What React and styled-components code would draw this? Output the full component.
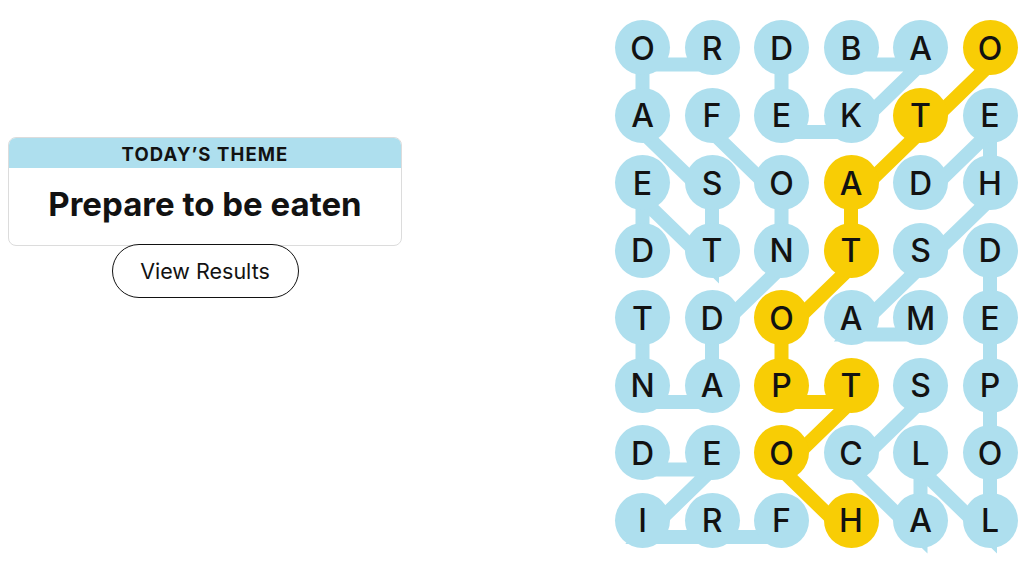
import React from "react";
import styled, { createGlobalStyle } from "styled-components";

const GlobalStyle = createGlobalStyle`
  html, body {
    margin: 0;
    padding: 0;
    background: #fff;
  }
  body {
    font-family: Inter, "Liberation Sans", Arial, sans-serif;
    color: #121212;
  }
`;

const BLUE = "#aedfee";
const YELLOW = "#f8cd05";

// board geometry
const CELL = 55;
const COL_STEP = 69.5;
const ROW_STEP = 67.5;
const LINE_SHIFT = 17;

const LETTERS = [
  "ORDBAO",
  "AFEKTE",
  "ESOADH",
  "DTNTSD",
  "TDOAME",
  "NAPTSP",
  "DEOCLO",
  "IRFHAL",
];

const WORDS = [
  // ROASTED
  { spangram: false, path: [[0, 1], [0, 0], [1, 0], [2, 1], [3, 1], [2, 0], [3, 0]] },
  // FONDANT
  { spangram: false, path: [[1, 1], [2, 2], [3, 2], [4, 1], [5, 1], [5, 0], [4, 0]] },
  // FRIED
  { spangram: false, path: [[7, 2], [7, 1], [7, 0], [6, 1], [6, 0]] },
  // BAKED
  { spangram: false, path: [[0, 3], [0, 4], [1, 3], [1, 2], [0, 2]] },
  // MASHED
  { spangram: false, path: [[4, 4], [4, 3], [3, 4], [2, 5], [1, 5], [2, 4]] },
  // SCALLOPED
  { spangram: false, path: [[5, 4], [6, 3], [7, 4], [6, 4], [7, 5], [6, 5], [5, 5], [4, 5], [3, 5]] },
  // HOTPOTATO
  { spangram: true, path: [[7, 3], [6, 2], [5, 3], [5, 2], [4, 2], [3, 3], [2, 3], [1, 4], [0, 5]] },
];

const spangramCells = new Set(
  WORDS.filter((w) => w.spangram).flatMap((w) => w.path.map(([r, c]) => `${r}-${c}`))
);

const Page = styled.main`
  display: flex;
  justify-content: space-between;
  align-items: flex-start;
  width: 1031px;
  height: 580px;
  padding: 0 13.5px 0 8px;
  box-sizing: border-box;
  overflow: hidden;
`;

const Side = styled.section`
  width: 394px;
  padding-top: 137px;
  display: flex;
  flex-direction: column;
  align-items: center;
`;

const ThemeCard = styled.div`
  width: 100%;
  box-sizing: border-box;
  border: 1px solid #dcdcdc;
  border-radius: 8px;
  overflow: hidden;
  background: #fff;
`;

const ThemeLabel = styled.h2`
  margin: 0;
  height: 30px;
  display: flex;
  align-items: center;
  justify-content: center;
  padding-top: 2px;
  box-sizing: border-box;
  background: ${BLUE};
  font-size: 18.5px;
  font-weight: 700;
  letter-spacing: 1.1px;
  text-transform: uppercase;
`;

const ThemeText = styled.h1`
  margin: 0;
  height: 77px;
  padding-bottom: 5px;
  box-sizing: border-box;
  display: flex;
  align-items: center;
  justify-content: center;
  font-size: 33px;
  font-weight: 700;
  letter-spacing: 0;
`;

const ResultsButton = styled.button`
  margin-top: -2px;
  width: 187px;
  height: 54px;
  border: 1px solid #121212;
  border-radius: 27px;
  background: #fff;
  color: #121212;
  font-family: inherit;
  font-size: 21.5px;
  font-weight: 400;
  cursor: pointer;
`;

const Board = styled.div`
  position: relative;
  margin-top: 20px;
`;

const Lines = styled.svg`
  position: absolute;
  left: 0;
  top: 0;
  overflow: visible;
  z-index: 0;
`;

const Grid = styled.div`
  position: relative;
  z-index: 1;
  display: grid;
  grid-template-columns: repeat(6, ${CELL}px);
  grid-auto-rows: ${CELL}px;
  column-gap: ${COL_STEP - CELL}px;
  row-gap: ${ROW_STEP - CELL}px;
`;

const Cell = styled.div`
  width: ${CELL}px;
  height: ${CELL}px;
  border-radius: 50%;
  background: ${(p) => (p.$spangram ? YELLOW : BLUE)};
  display: flex;
  align-items: center;
  justify-content: center;
  padding-top: 1px;
  box-sizing: border-box;
  font-size: 32px;
  font-weight: 500;
  color: #121212;
`;

const cx = (c) => CELL / 2 + c * COL_STEP;
const cy = (r) => CELL / 2 + r * ROW_STEP + LINE_SHIFT;

const boardW = 6 * CELL + 5 * (COL_STEP - CELL);
const boardH = 8 * CELL + 7 * (ROW_STEP - CELL);

const App = () => {
  return (
    <>
      <GlobalStyle />
      <Page>
        <Side>
          <ThemeCard>
            <ThemeLabel>Today’s Theme</ThemeLabel>
            <ThemeText>Prepare to be eaten</ThemeText>
          </ThemeCard>
          <ResultsButton>View Results</ResultsButton>
        </Side>

        <Board>
          <Lines width={boardW} height={boardH} viewBox={`0 0 ${boardW} ${boardH}`}>
            {WORDS.map((word, i) => (
              <polyline
                key={i}
                points={word.path.map(([r, c]) => `${cx(c)},${cy(r)}`).join(" ")}
                fill="none"
                stroke={word.spangram ? YELLOW : BLUE}
                strokeWidth="14"
                strokeLinejoin="miter"
                strokeLinecap="butt"
              />
            ))}
          </Lines>
          <Grid>
            {LETTERS.map((row, r) =>
              row.split("").map((ch, c) => (
                <Cell key={`${r}-${c}`} $spangram={spangramCells.has(`${r}-${c}`)}>
                  {ch}
                </Cell>
              ))
            )}
          </Grid>
        </Board>
      </Page>
    </>
  );
};

export default App;
